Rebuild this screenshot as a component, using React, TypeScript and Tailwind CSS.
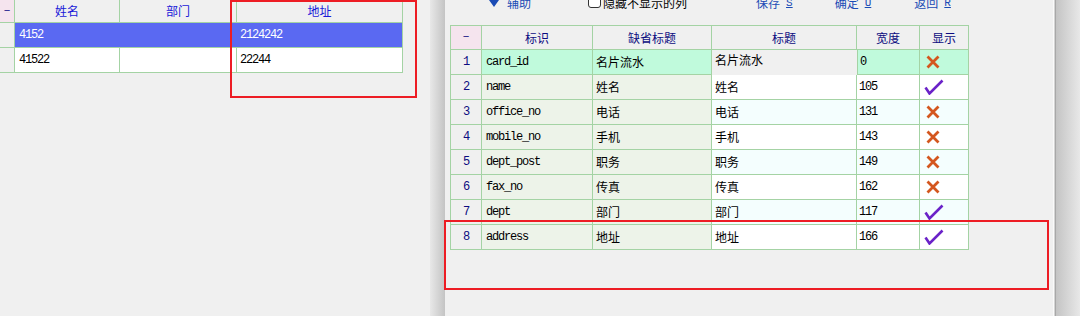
import React from "react";

const CJK = "font-['Noto_Sans_CJK_SC','Noto_Sans',sans-serif]";
const MONO = "font-['Liberation_Mono','Noto_Sans_CJK_SC',monospace]";
const NUM = `${MONO} text-[12px] tracking-[-1.2px]`;

type Row = { id: string; def: string; title: string; w: string; show: boolean };
const rows: Row[] = [
  { id: "card_id", def: "名片流水", title: "名片流水", w: "0", show: false },
  { id: "name", def: "姓名", title: "姓名", w: "105", show: true },
  { id: "office_no", def: "电话", title: "电话", w: "131", show: false },
  { id: "mobile_no", def: "手机", title: "手机", w: "143", show: false },
  { id: "dept_post", def: "职务", title: "职务", w: "149", show: false },
  { id: "fax_no", def: "传真", title: "传真", w: "162", show: false },
  { id: "dept", def: "部门", title: "部门", w: "117", show: true },
  { id: "address", def: "地址", title: "地址", w: "166", show: true },
];

function XIcon() {
  return (
    <svg width="14" height="14" viewBox="0 0 14 14" className="block">
      <path d="M1.5 1.5 L12.5 12.5 M12.5 1.5 L1.5 12.5" stroke="#d4561e" strokeWidth="2.8" fill="none" />
    </svg>
  );
}

function CheckIcon() {
  return (
    <svg width="20" height="16" viewBox="0 0 20 16" className="block">
      <path d="M1.5 8.5 L5.5 14.5 L18.5 1.5" stroke="#6a22c8" strokeWidth="2.6" fill="none" strokeLinejoin="miter" />
    </svg>
  );
}

function LeftGrid() {
  const b = "border-[#a4d3a4]";
  return (
    <div className="flex flex-col w-[403px]">
      <div className={`flex h-[23px] border-b ${b}`}>
        <div className={`w-[15px] border-r ${b} bg-[#f5e4ee] flex items-center justify-center text-[#10108a] ${MONO} text-[11px]`}>−</div>
        <div className={`w-[105px] border-r ${b} flex items-center justify-center text-[#1818d8] ${CJK} text-[12px]`}>姓名</div>
        <div className={`w-[117px] border-r ${b} flex items-center justify-center text-[#1818d8] ${CJK} text-[12px]`}>部门</div>
        <div className={`w-[166px] border-r ${b} flex items-center justify-center text-[#1818d8] ${CJK} text-[12px]`}>地址</div>
      </div>
      <div className={`flex h-[25px] border-b ${b}`}>
        <div className={`w-[15px] border-r ${b} bg-[#f0f0f0]`}></div>
        <div className={`w-[105px] border-r border-[#5a69f2] bg-[#5a69f2] flex items-center pl-[4px] text-white ${NUM}`}>4152</div>
        <div className={`w-[117px] border-r border-[#5a69f2] bg-[#5a69f2]`}></div>
        <div className={`w-[166px] border-r ${b} bg-[#5a69f2] flex items-center pl-[3px] text-white ${NUM}`}>2124242</div>
      </div>
      <div className={`flex h-[25px] border-b ${b}`}>
        <div className={`w-[15px] border-r ${b} bg-[#f0f0f0]`}></div>
        <div className={`w-[105px] border-r ${b} bg-white flex items-center pl-[4px] text-black ${NUM}`}>41522</div>
        <div className={`w-[117px] border-r ${b} bg-white`}></div>
        <div className={`w-[166px] border-r ${b} bg-white flex items-center pl-[3px] text-black ${NUM}`}>22244</div>
      </div>
    </div>
  );
}

function Toolbar() {
  const blue = "text-[#1a4bb5]";
  return (
    <div className={`flex items-center h-[16px] -mt-[5px] leading-[16px] text-[12px] ${CJK}`}>
      <svg width="10" height="12" viewBox="0 0 10 12" className="ml-[44px] self-start block">
        <path d="M3 0 H7 V5 H10 L5 12 L0 5 H3 Z" fill="#1a4bb5" />
      </svg>
      <span className={`ml-[8px] ${blue}`}>辅助</span>
      <div className="ml-[57px] self-start w-[13px] h-[13px] border border-[#333] rounded-[3px] bg-white"></div>
      <span className="ml-[2px] text-black">隐藏不显示的列</span>
      <span className={`ml-[69px] ${blue} flex items-center`}>
        保存<span className={`ml-[6px] underline ${MONO} text-[11px]`}>S</span>
      </span>
      <span className={`ml-[42px] ${blue} flex items-center`}>
        确定<span className={`ml-[6px] underline ${MONO} text-[11px]`}>U</span>
      </span>
      <span className={`ml-[43px] ${blue} flex items-center`}>
        返回<span className={`ml-[6px] underline ${MONO} text-[11px]`}>R</span>
      </span>
    </div>
  );
}

function DialogTable() {
  const b = "border-[#a4d3a4]";
  const hdr = `border-r ${b} flex items-center justify-center text-[#0c0c80] ${CJK} text-[12px]`;
  return (
    <div className={`ml-[5px] mt-[14px] w-[519px] border-l border-t ${b} flex flex-col`}>
      <div className={`flex h-[24px] border-b ${b}`}>
        <div className={`w-[31px] bg-[#f5e4ee] ${hdr}`}>
          <span className={`${MONO} text-[11px]`}>−</span>
        </div>
        <div className={`w-[111px] ${hdr}`}>标识</div>
        <div className={`w-[119px] ${hdr}`}>缺省标题</div>
        <div className={`w-[145px] ${hdr}`}>标题</div>
        <div className={`w-[63px] ${hdr}`}>宽度</div>
        <div className={`w-[49px] ${hdr}`}>显示</div>
      </div>
      {rows.map((r, i) => {
        const first = i === 0;
        const left = first ? "bg-[#c0fadc]" : "bg-[#edf3e9]";
        const alt = first ? "bg-[#c0fadc]" : i % 2 === 0 ? "bg-[#f4fefe]" : "bg-white";
        return (
          <div key={r.id} className={`flex h-[25px] ${first ? "" : `border-b ${b}`}`}>
            <div className={`w-[31px] border-r ${b} ${first ? `border-b` : ""} bg-[#f0f0f0] flex items-center justify-center text-[#0c0c80] ${NUM}`}>
              {i + 1}
            </div>
            <div className={`w-[111px] border-r ${b} ${first ? `border-b` : ""} ${left} flex items-center pl-[4px] text-black ${NUM}`}>
              {r.id}
            </div>
            <div className={`w-[119px] border-r ${b} ${first ? `border-b` : ""} ${left} flex items-center pl-[3px] text-black ${CJK} text-[12px]`}>
              {r.def}
            </div>
            {first ? (
              <div className={`w-[145px] bg-[#f0f0f0] flex items-start pt-[1px] pl-[3px] text-black ${CJK} text-[12px]`}>
                {r.title}
              </div>
            ) : (
              <div className={`w-[145px] border-r ${b} ${alt} flex items-center pl-[3px] text-black ${CJK} text-[12px]`}>
                {r.title}
              </div>
            )}
            <div className={`w-[63px] border-r ${b} ${first ? `border-b border-l` : ""} ${alt} flex items-center pl-[2px] text-black ${NUM}`}>
              {r.w}
            </div>
            <div className={`w-[49px] border-r ${b} ${first ? `border-b` : ""} ${alt} flex items-center ${r.show ? "pl-[4px]" : "pl-[6px]"}`}>
              {r.show ? <CheckIcon /> : <XIcon />}
            </div>
          </div>
        );
      })}
    </div>
  );
}

export default function App() {
  return (
    <div className="relative flex w-[1080px] h-[316px] overflow-hidden bg-[#f0f0f0]">
      <div className="w-[430px] shrink-0">
        <LeftGrid />
      </div>
      <div className="w-[15px] shrink-0 bg-linear-to-r from-[#e8e8e8] to-[#c4c4c4]"></div>
      <div className="w-[608px] shrink-0 flex flex-col bg-[#f0f0f0]">
        <Toolbar />
        <DialogTable />
      </div>
      <div className="w-[27px] shrink-0 flex">
        <div className="w-[1px] bg-[#fafafa]"></div>
        <div className="w-[1px] bg-[#d4d4d4]"></div>
        <div className="w-[1px] bg-[#a8a8a8]"></div>
        <div className="flex-1 bg-linear-to-r from-[#c4c4c4] to-[#e8e8e8]"></div>
      </div>
      <div className="absolute left-[230px] top-0 w-[187px] h-[98px] border-2 border-[#ed1c24]"></div>
      <div className="absolute left-[444px] top-[220px] w-[605px] h-[70px] border-2 border-[#ed1c24]"></div>
    </div>
  );
}
